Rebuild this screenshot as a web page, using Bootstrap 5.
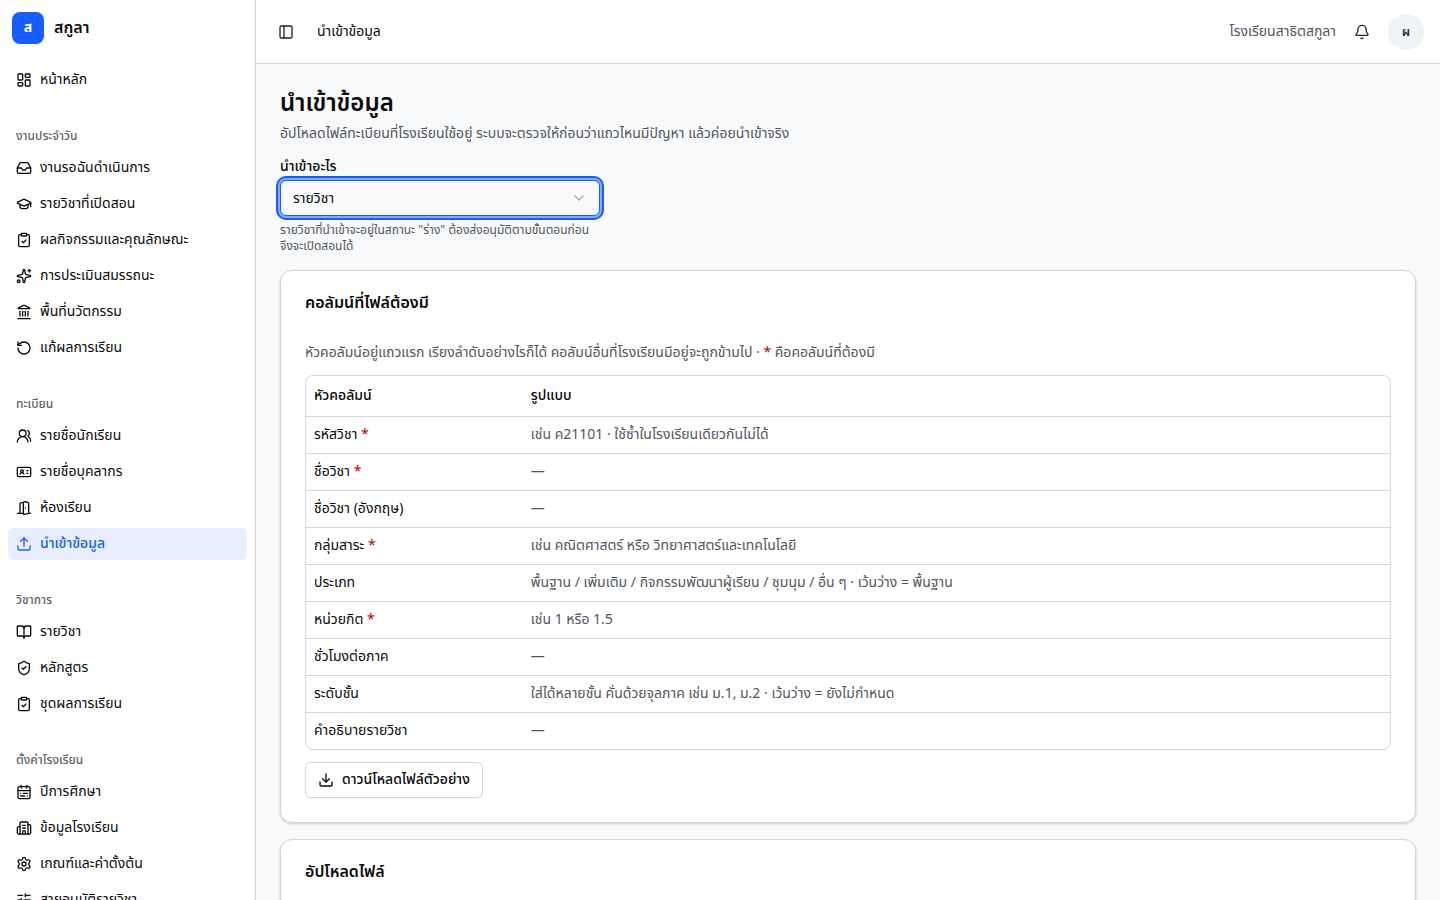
<!DOCTYPE html>
<html lang="th">
<head>
<meta charset="utf-8">
<meta name="viewport" content="width=device-width, initial-scale=1">
<title>นำเข้าข้อมูล · สกูลา</title>
<link rel="stylesheet" href="https://cdn.jsdelivr.net/npm/bootstrap@5.3.0/dist/css/bootstrap.min.css">
<style>
:root { --brand: #155dfc; --ink: #0a0a0a; --muted: #52555b; --line: #d4d6da; --page: #f8f9fb; }
body { font-family: "Noto Sans Thai", "Noto Sans", sans-serif; font-size: 14px; line-height: 20px; color: var(--ink); background: var(--page); }
.ico { width: 16px; height: 16px; flex: none; fill: none; stroke: currentColor; stroke-width: 2; stroke-linecap: round; stroke-linejoin: round; }
.text-soft { color: var(--muted); }
.scroll-pane { overflow-y: auto; scrollbar-width: none; }
.scroll-pane::-webkit-scrollbar { display: none; }
.sidebar { width: 256px; flex: none; border-right: 1px solid var(--line); }
.brand { padding: 12px; gap: 10px; font-size: 16px; font-weight: 600; color: var(--ink); }
.brand-mark { width: 32px; height: 32px; border-radius: 8px; background: var(--brand); font-size: 14px; font-weight: 700; }
.side-group { padding: 8px; margin-bottom: 8px; }
.side-title { font-size: 12px; line-height: 32px; font-weight: 500; padding: 0 8px; margin: 0; color: #5f6167; }
.side-list { gap: 4px; }
.side-list .nav-link { height: 32px; padding: 0 8px; gap: 8px; border-radius: 6px; color: var(--ink); white-space: nowrap; }
.side-list .nav-link.active { background: #e8eeff; color: var(--brand); font-weight: 500; }
.topbar { height: 64px; flex: none; padding: 0 16px; border-bottom: 1px solid var(--line); }
.icon-btn { width: 28px; height: 28px; padding: 0; border: 0; }
.crumb { margin-left: 17px; }
.avatar { width: 36px; height: 36px; padding: 0; border: 0; background: #eff3f6; font-size: 12px; font-weight: 600; }
.page-body { padding: 24px; gap: 16px; }
.page-title { font-size: 24px; line-height: 32px; font-weight: 600; margin: 0 0 4px; }
.field { max-width: 320px; gap: 6px; }
.field label { line-height: 14px; font-weight: 500; }
.field .form-select { height: 36px; padding: 0 36px 0 12px; font-size: 14px; color: var(--ink); border: 1px solid var(--brand); border-radius: 6px;
  outline: 2px solid var(--brand); outline-offset: 2px; box-shadow: 0 0 0 3px rgba(21, 93, 252, .5);
  background-color: var(--page); background-size: 16px 16px; background-position: right 12px center;
  background-image: url("data:image/svg+xml,%3Csvg xmlns='http://www.w3.org/2000/svg' viewBox='0 0 24 24' fill='none' stroke='%23a6a8ac' stroke-width='2' stroke-linecap='round' stroke-linejoin='round'%3E%3Cpath d='m6 9 6 6 6-6'/%3E%3C/svg%3E"); }
.hint { font-size: 12px; line-height: 16px; margin: 0; }
.panel { padding: 24px; border: 1px solid var(--line); border-radius: 12px; box-shadow: 0 1px 3px rgba(0, 0, 0, .1), 0 1px 2px rgba(0, 0, 0, .08); }
.panel-title { font-size: 16px; line-height: 16px; font-weight: 600; margin: 0 0 32px; }
.table-frame { border: 1px solid var(--line); border-radius: 8px; overflow: hidden; margin: 12px 0; }
.spec-table { margin: 0; color: var(--ink); border-color: var(--line); }
.spec-table > * > tr > * { padding: 8px; color: inherit; }
.spec-table thead th { height: 40px; padding-top: 0; padding-bottom: 0; font-weight: 500; vertical-align: middle; }
.spec-table th:first-child { width: 20%; }
.spec-table tbody th { font-weight: 400; }
.spec-table tbody td.text-soft { color: var(--muted); }
.spec-table tbody tr:last-child > * { border-bottom: 0; }
.req { color: #c10007; }
.outline-btn { height: 36px; padding: 0 12px; gap: 8px; font-size: 14px; font-weight: 500; color: var(--ink); background: #fff; border: 1px solid var(--line); border-radius: 6px; box-shadow: 0 1px 2px rgba(0, 0, 0, .05); }
</style>
</head>
<body>
<div class="d-flex vh-100 overflow-hidden">
  <aside class="sidebar bg-white d-flex flex-column">
    <a href="#" class="brand d-flex align-items-center text-decoration-none">
      <span class="brand-mark d-flex align-items-center justify-content-center text-white">ส</span>
      <span>สกูลา</span>
    </a>
    <nav class="scroll-pane flex-grow-1" aria-label="เมนูหลัก">
      <div class="side-group">
        <ul class="side-list nav flex-column flex-nowrap">
          <li><a href="#" class="nav-link d-flex align-items-center"><svg class="ico" viewBox="0 0 24 24"><rect x="3" y="3" width="7" height="9" rx="1"/><rect x="14" y="3" width="7" height="5" rx="1"/><rect x="14" y="12" width="7" height="9" rx="1"/><rect x="3" y="16" width="7" height="5" rx="1"/></svg><span>หน้าหลัก</span></a></li>
        </ul>
      </div>
      <div class="side-group">
        <h2 class="side-title">งานประจำวัน</h2>
        <ul class="side-list nav flex-column flex-nowrap">
          <li><a href="#" class="nav-link d-flex align-items-center"><svg class="ico" viewBox="0 0 24 24"><path d="M22 12h-6l-2 3h-4l-2-3H2"/><path d="M5.45 5.11 2 12v6a2 2 0 0 0 2 2h16a2 2 0 0 0 2-2v-6l-3.45-6.89A2 2 0 0 0 16.76 4H7.24a2 2 0 0 0-1.79 1.11z"/></svg><span>งานรอฉันดำเนินการ</span></a></li>
          <li><a href="#" class="nav-link d-flex align-items-center"><svg class="ico" viewBox="0 0 24 24"><path d="M21.42 10.922a1 1 0 0 0-.019-1.838L12.83 5.18a2 2 0 0 0-1.66 0L2.6 9.08a1 1 0 0 0 0 1.832l8.57 3.908a2 2 0 0 0 1.66 0z"/><path d="M22 10v6"/><path d="M6 12.5V16a6 3 0 0 0 12 0v-3.5"/></svg><span>รายวิชาที่เปิดสอน</span></a></li>
          <li><a href="#" class="nav-link d-flex align-items-center"><svg class="ico" viewBox="0 0 24 24"><rect x="8" y="2" width="8" height="4" rx="1"/><path d="M16 4h2a2 2 0 0 1 2 2v14a2 2 0 0 1-2 2H6a2 2 0 0 1-2-2V6a2 2 0 0 1 2-2h2"/><path d="m9 14 2 2 4-4"/></svg><span>ผลกิจกรรมและคุณลักษณะ</span></a></li>
          <li><a href="#" class="nav-link d-flex align-items-center"><svg class="ico" viewBox="0 0 24 24"><path d="M11.017 2.814a1 1 0 0 1 1.966 0l1.051 5.558a2 2 0 0 0 1.594 1.594l5.558 1.051a1 1 0 0 1 0 1.966l-5.558 1.051a2 2 0 0 0-1.594 1.594l-1.051 5.558a1 1 0 0 1-1.966 0l-1.051-5.558a2 2 0 0 0-1.594-1.594l-5.558-1.051a1 1 0 0 1 0-1.966l5.558-1.051a2 2 0 0 0 1.594-1.594z"/><path d="M20 2v4"/><path d="M22 4h-4"/><circle cx="4" cy="20" r="2"/></svg><span>การประเมินสมรรถนะ</span></a></li>
          <li><a href="#" class="nav-link d-flex align-items-center"><svg class="ico" viewBox="0 0 24 24"><path d="M10 18v-7"/><path d="M11.119 2.205a2 2 0 0 1 1.762 0l7.84 3.846A.5.5 0 0 1 20.5 7h-17a.5.5 0 0 1-.22-.949z"/><path d="M14 18v-7"/><path d="M18 18v-7"/><path d="M3 22h18"/><path d="M6 18v-7"/></svg><span>พื้นที่นวัตกรรม</span></a></li>
          <li><a href="#" class="nav-link d-flex align-items-center"><svg class="ico" viewBox="0 0 24 24"><path d="M3 12a9 9 0 1 0 9-9 9.75 9.75 0 0 0-6.74 2.74L3 8"/><path d="M3 3v5h5"/></svg><span>แก้ผลการเรียน</span></a></li>
        </ul>
      </div>
      <div class="side-group">
        <h2 class="side-title">ทะเบียน</h2>
        <ul class="side-list nav flex-column flex-nowrap">
          <li><a href="#" class="nav-link d-flex align-items-center"><svg class="ico" viewBox="0 0 24 24"><path d="M18 21a8 8 0 0 0-16 0"/><circle cx="10" cy="8" r="5"/><path d="M22 20c0-3.37-2-6.5-4-8a5 5 0 0 0-.45-8.3"/></svg><span>รายชื่อนักเรียน</span></a></li>
          <li><a href="#" class="nav-link d-flex align-items-center"><svg class="ico" viewBox="0 0 24 24"><path d="M16 10h2"/><path d="M16 14h2"/><path d="M6.17 15a3 3 0 0 1 5.66 0"/><circle cx="9" cy="11" r="2"/><rect x="2" y="5" width="20" height="14" rx="2"/></svg><span>รายชื่อบุคลากร</span></a></li>
          <li><a href="#" class="nav-link d-flex align-items-center"><svg class="ico" viewBox="0 0 24 24"><path d="M11 20H2"/><path d="M11 4.562v16.157a1 1 0 0 0 1.242.97L19 20V5.562a2 2 0 0 0-1.515-1.94l-4-1A2 2 0 0 0 11 4.561z"/><path d="M11 4H8a2 2 0 0 0-2 2v14"/><path d="M14 12h.01"/><path d="M22 20h-3"/></svg><span>ห้องเรียน</span></a></li>
          <li><a href="#" class="nav-link active d-flex align-items-center" aria-current="page"><svg class="ico" viewBox="0 0 24 24"><path d="M12 3v12"/><path d="m17 8-5-5-5 5"/><path d="M21 15v4a2 2 0 0 1-2 2H5a2 2 0 0 1-2-2v-4"/></svg><span>นำเข้าข้อมูล</span></a></li>
        </ul>
      </div>
      <div class="side-group">
        <h2 class="side-title">วิชาการ</h2>
        <ul class="side-list nav flex-column flex-nowrap">
          <li><a href="#" class="nav-link d-flex align-items-center"><svg class="ico" viewBox="0 0 24 24"><path d="M12 7v14"/><path d="M3 18a1 1 0 0 1-1-1V4a1 1 0 0 1 1-1h5a4 4 0 0 1 4 4 4 4 0 0 1 4-4h5a1 1 0 0 1 1 1v13a1 1 0 0 1-1 1h-6a3 3 0 0 0-3 3 3 3 0 0 0-3-3z"/></svg><span>รายวิชา</span></a></li>
          <li><a href="#" class="nav-link d-flex align-items-center"><svg class="ico" viewBox="0 0 24 24"><path d="M20 13c0 5-3.5 7.5-7.66 8.95a1 1 0 0 1-.67-.01C7.5 20.5 4 18 4 13V6a1 1 0 0 1 1-1c2 0 4.5-1.2 6.24-2.72a1.17 1.17 0 0 1 1.52 0C14.51 3.81 17 5 19 5a1 1 0 0 1 1 1z"/><path d="m9 12 2 2 4-4"/></svg><span>หลักสูตร</span></a></li>
          <li><a href="#" class="nav-link d-flex align-items-center"><svg class="ico" viewBox="0 0 24 24"><rect x="8" y="2" width="8" height="4" rx="1"/><path d="M16 4h2a2 2 0 0 1 2 2v14a2 2 0 0 1-2 2H6a2 2 0 0 1-2-2V6a2 2 0 0 1 2-2h2"/><path d="m9 14 2 2 4-4"/></svg><span>ชุดผลการเรียน</span></a></li>
        </ul>
      </div>
      <div class="side-group">
        <h2 class="side-title">ตั้งค่าโรงเรียน</h2>
        <ul class="side-list nav flex-column flex-nowrap">
          <li><a href="#" class="nav-link d-flex align-items-center"><svg class="ico" viewBox="0 0 24 24"><rect x="3" y="4" width="18" height="18" rx="2"/><path d="M16 2v4"/><path d="M3 10h18"/><path d="M8 2v4"/><path d="M17 14h-6"/><path d="M13 18H7"/><path d="M7 14h.01"/><path d="M17 18h.01"/></svg><span>ปีการศึกษา</span></a></li>
          <li><a href="#" class="nav-link d-flex align-items-center"><svg class="ico" viewBox="0 0 24 24"><path d="M10 12h4"/><path d="M10 8h4"/><path d="M14 21v-3a2 2 0 0 0-4 0v3"/><path d="M6 10H4a2 2 0 0 0-2 2v7a2 2 0 0 0 2 2h16a2 2 0 0 0 2-2V9a2 2 0 0 0-2-2h-2"/><path d="M6 21V5a2 2 0 0 1 2-2h8a2 2 0 0 1 2 2v16"/></svg><span>ข้อมูลโรงเรียน</span></a></li>
          <li><a href="#" class="nav-link d-flex align-items-center"><svg class="ico" viewBox="0 0 24 24"><path d="M9.671 4.136a2.34 2.34 0 0 1 4.659 0 2.34 2.34 0 0 0 3.319 1.915 2.34 2.34 0 0 1 2.33 4.033 2.34 2.34 0 0 0 0 3.831 2.34 2.34 0 0 1-2.33 4.033 2.34 2.34 0 0 0-3.319 1.915 2.34 2.34 0 0 1-4.659 0 2.34 2.34 0 0 0-3.32-1.915 2.34 2.34 0 0 1-2.33-4.033 2.34 2.34 0 0 0 0-3.831A2.34 2.34 0 0 1 6.35 6.051a2.34 2.34 0 0 0 3.319-1.915"/><circle cx="12" cy="12" r="3"/></svg><span>เกณฑ์และค่าตั้งต้น</span></a></li>
          <li><a href="#" class="nav-link d-flex align-items-center"><svg class="ico" viewBox="0 0 24 24"><path d="M10 5H3"/><path d="M12 19H3"/><path d="M14 3v4"/><path d="M16 17v4"/><path d="M21 12h-9"/><path d="M21 19h-5"/><path d="M21 5h-7"/><path d="M8 10v4"/><path d="M8 12H3"/></svg><span>สายอนุมัติรายวิชา</span></a></li>
        </ul>
      </div>
    </nav>
  </aside>

  <div class="d-flex flex-column flex-grow-1 overflow-hidden">
    <header class="topbar bg-white d-flex align-items-center">
      <button type="button" class="icon-btn btn d-flex align-items-center justify-content-center" aria-label="สลับแถบเมนู"><svg class="ico" viewBox="0 0 24 24"><rect x="3" y="3" width="18" height="18" rx="2"/><path d="M9 3v18"/></svg></button>
      <span class="crumb">นำเข้าข้อมูล</span>
      <span class="text-soft ms-auto me-2">โรงเรียนสาธิตสกูลา</span>
      <button type="button" class="icon-btn btn d-flex align-items-center justify-content-center mx-1" aria-label="การแจ้งเตือน"><svg class="ico" viewBox="0 0 24 24"><path d="M10.268 21a2 2 0 0 0 3.464 0"/><path d="M3.262 15.326A1 1 0 0 0 4 17h16a1 1 0 0 0 .74-1.673C19.41 13.956 18 12.499 18 8A6 6 0 0 0 6 8c0 4.499-1.411 5.956-2.738 7.326"/></svg></button>
      <button type="button" class="avatar btn rounded-circle ms-2" aria-label="บัญชีผู้ใช้">ผ</button>
    </header>

    <main class="page-body scroll-pane d-flex flex-column flex-grow-1">
      <div>
        <h1 class="page-title">นำเข้าข้อมูล</h1>
        <p class="text-soft mb-0">อัปโหลดไฟล์ทะเบียนที่โรงเรียนใช้อยู่ ระบบจะตรวจให้ก่อนว่าแถวไหนมีปัญหา แล้วค่อยนำเข้าจริง</p>
      </div>
      <div class="field d-flex flex-column">
        <label for="kind">นำเข้าอะไร</label>
        <select id="kind" class="form-select" aria-describedby="kind-hint">
          <option>รายวิชา</option>
        </select>
        <p id="kind-hint" class="hint text-soft">รายวิชาที่นำเข้าจะอยู่ในสถานะ "ร่าง" ต้องส่งอนุมัติตามขั้นตอนก่อนจึงจะเปิดสอนได้</p>
      </div>

      <section class="panel bg-white">
        <h2 class="panel-title">คอลัมน์ที่ไฟล์ต้องมี</h2>
        <p class="text-soft mb-0">หัวคอลัมน์อยู่แถวแรก เรียงลำดับอย่างไรก็ได้ คอลัมน์อื่นที่โรงเรียนมีอยู่จะถูกข้ามไป · <span class="req">*</span> คือคอลัมน์ที่ต้องมี</p>
        <div class="table-frame">
          <table class="table spec-table">
            <thead><tr><th scope="col">หัวคอลัมน์</th><th scope="col">รูปแบบ</th></tr></thead>
            <tbody>
              <tr><th scope="row">รหัสวิชา <span class="req">*</span></th><td class="text-soft">เช่น ค21101 · ใช้ซ้ำในโรงเรียนเดียวกันไม่ได้</td></tr>
              <tr><th scope="row">ชื่อวิชา <span class="req">*</span></th><td class="text-soft">—</td></tr>
              <tr><th scope="row">ชื่อวิชา (อังกฤษ)</th><td class="text-soft">—</td></tr>
              <tr><th scope="row">กลุ่มสาระ <span class="req">*</span></th><td class="text-soft">เช่น คณิตศาสตร์ หรือ วิทยาศาสตร์และเทคโนโลยี</td></tr>
              <tr><th scope="row">ประเภท</th><td class="text-soft">พื้นฐาน / เพิ่มเติม / กิจกรรมพัฒนาผู้เรียน / ชุมนุม / อื่น ๆ · เว้นว่าง = พื้นฐาน</td></tr>
              <tr><th scope="row">หน่วยกิต <span class="req">*</span></th><td class="text-soft">เช่น 1 หรือ 1.5</td></tr>
              <tr><th scope="row">ชั่วโมงต่อภาค</th><td class="text-soft">—</td></tr>
              <tr><th scope="row">ระดับชั้น</th><td class="text-soft">ใส่ได้หลายชั้น คั่นด้วยจุลภาค เช่น ม.1, ม.2 · เว้นว่าง = ยังไม่กำหนด</td></tr>
              <tr><th scope="row">คำอธิบายรายวิชา</th><td class="text-soft">—</td></tr>
            </tbody>
          </table>
        </div>
        <button type="button" class="outline-btn btn d-inline-flex align-items-center"><svg class="ico" viewBox="0 0 24 24"><path d="M12 15V3"/><path d="M21 15v4a2 2 0 0 1-2 2H5a2 2 0 0 1-2-2v-4"/><path d="m7 10 5 5 5-5"/></svg><span>ดาวน์โหลดไฟล์ตัวอย่าง</span></button>
      </section>

      <section class="panel bg-white">
        <h2 class="panel-title">อัปโหลดไฟล์</h2>
      </section>
    </main>
  </div>
</div>
<script src="https://cdn.jsdelivr.net/npm/bootstrap@5.3.0/dist/js/bootstrap.bundle.min.js"></script>
</body>
</html>
